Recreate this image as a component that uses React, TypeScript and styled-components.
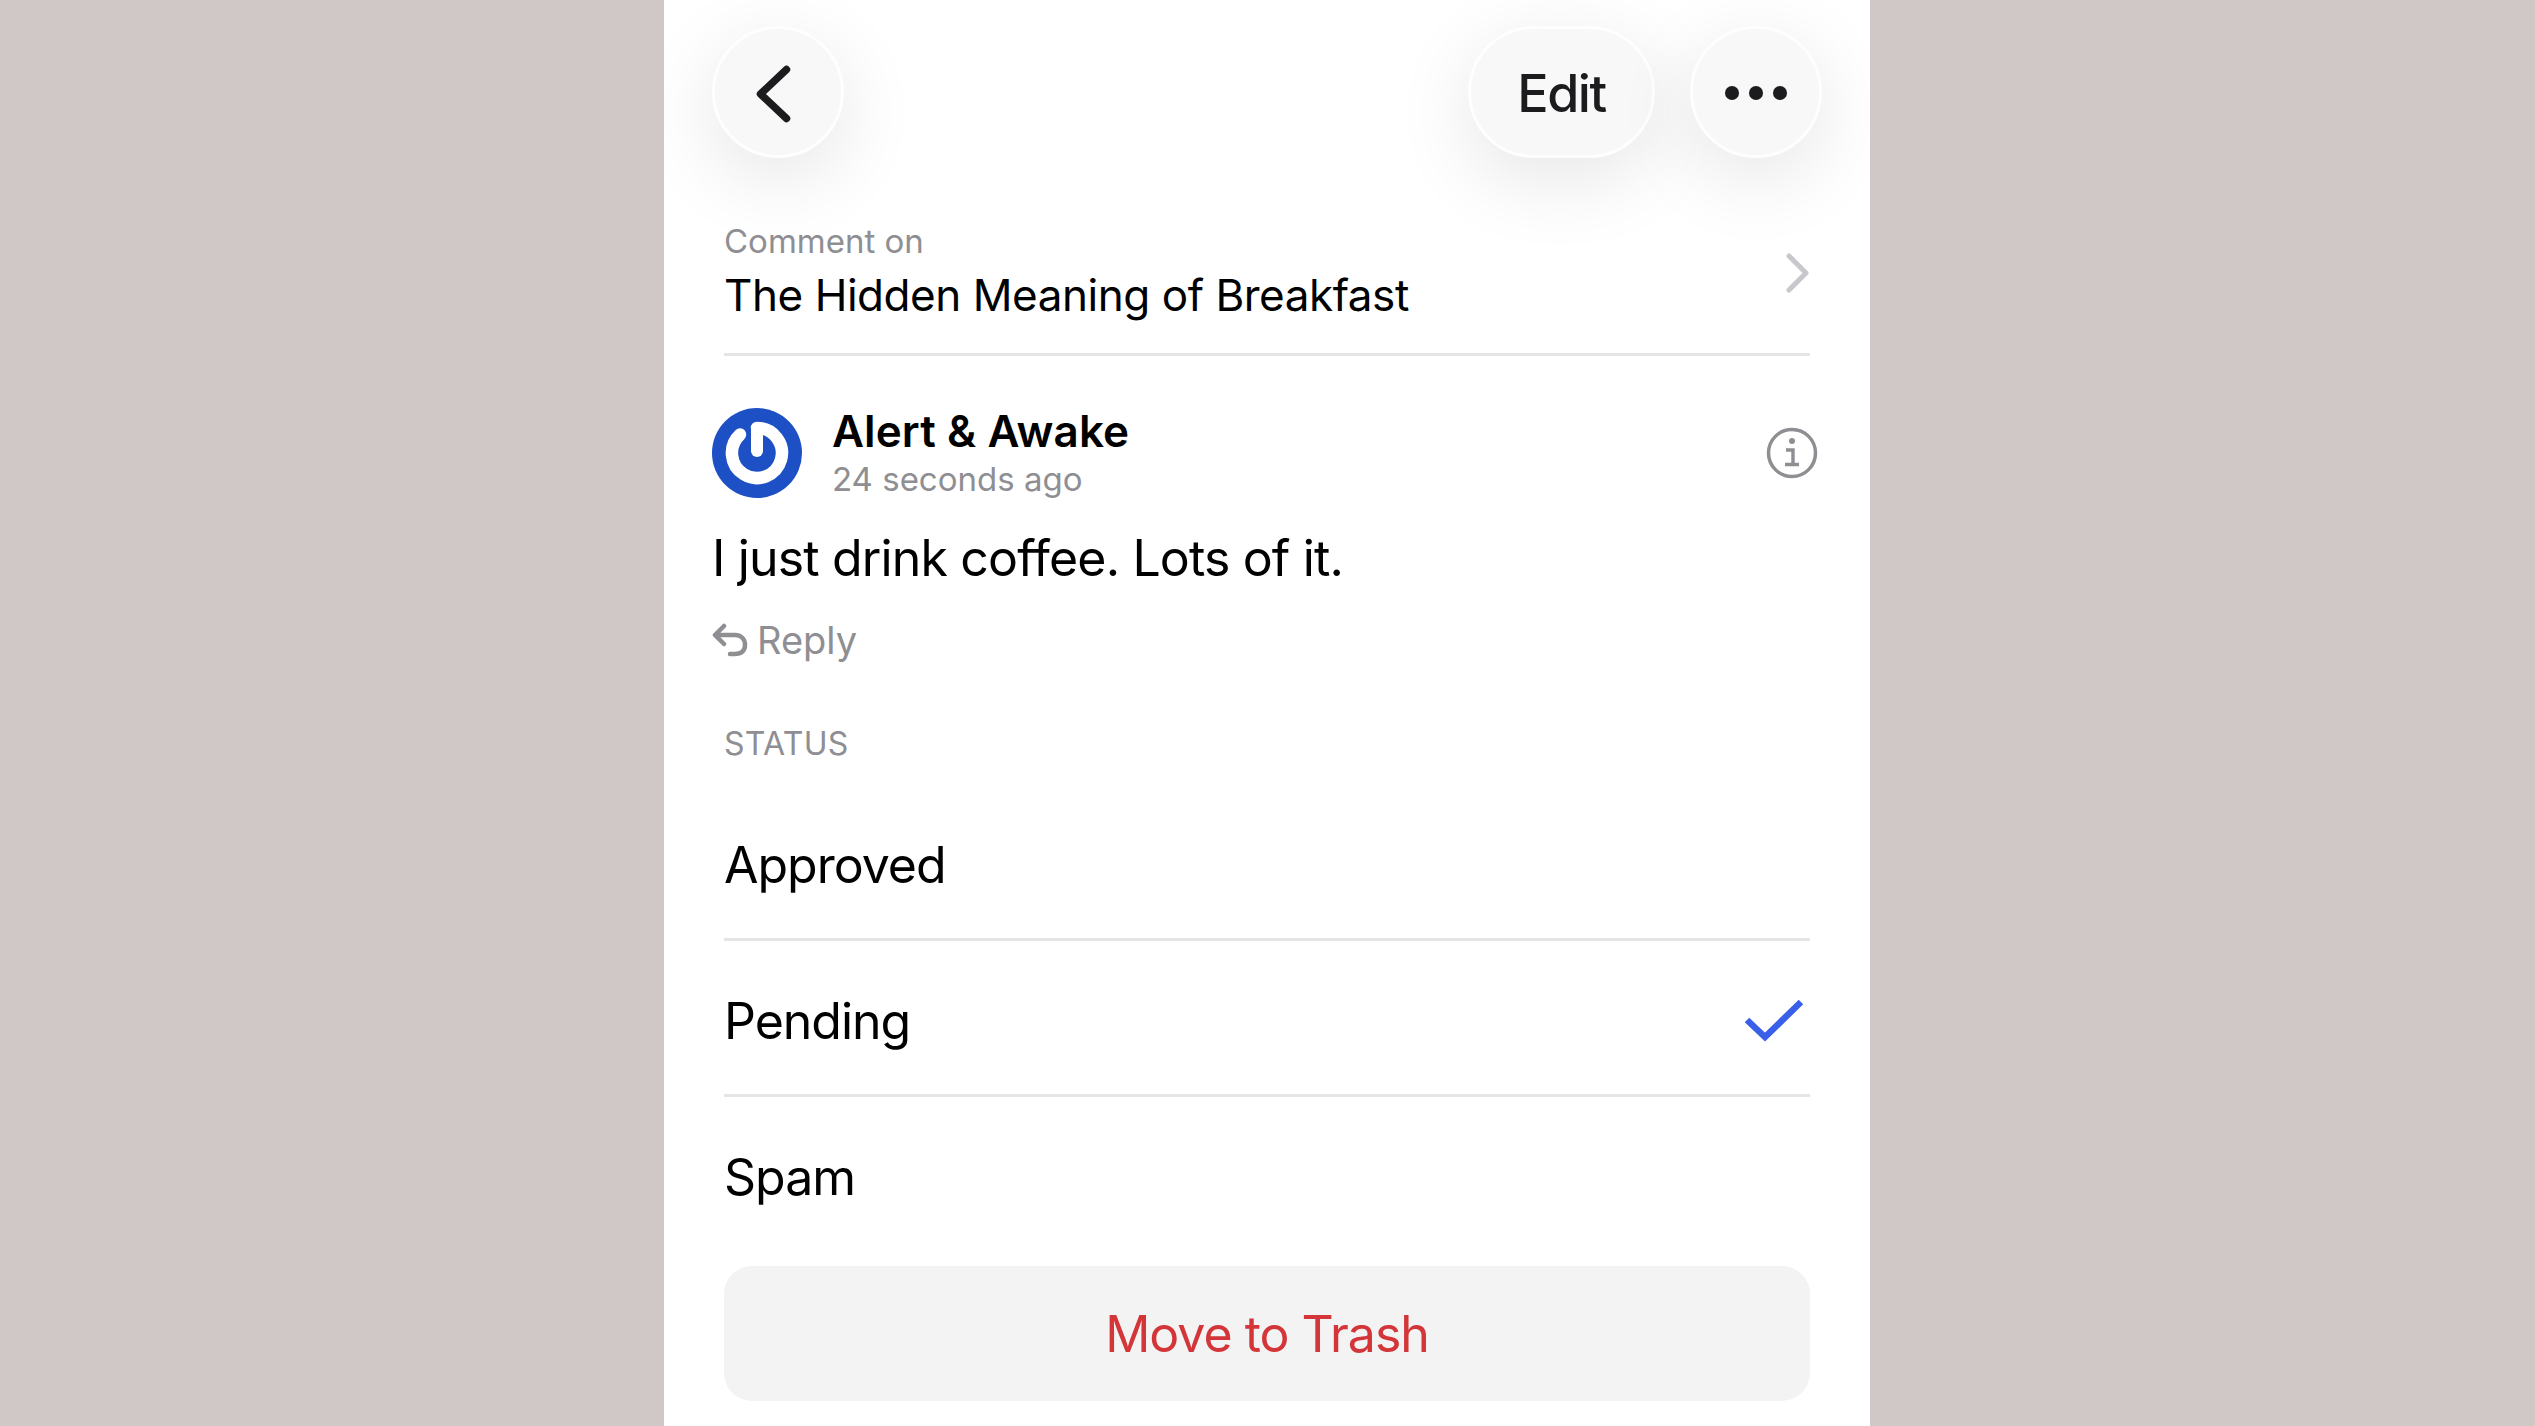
import { createGlobalStyle, styled } from "styled-components";

const GlobalStyle = createGlobalStyle`
  html, body {
    margin: 0;
    padding: 0;
    background: #d0c8c7;
  }

  body {
    font-family: Inter, "Noto Sans", sans-serif;
  }
`;

const Page = styled.div`
  width: 100%;
  height: 1426px;
  box-sizing: border-box;
  padding-right: 1px;
  display: flex;
  justify-content: center;
  overflow: hidden;
  background: #d0c8c7;
`;

const Phone = styled.div`
  width: 1206px;
  height: 1426px;
  background: #fff;
  display: flex;
  flex-direction: column;
  overflow: hidden;
`;

const TopBar = styled.div`
  display: flex;
  align-items: center;
  gap: 35px;
  padding: 26px 48px 0;
  height: 132px;
  flex-shrink: 0;
`;

const FloatButton = styled.div<{ $wide?: boolean }>`
  width: ${({ $wide }) => ($wide ? "187px" : "132px")};
  height: 132px;
  box-sizing: border-box;
  border: 3px solid #fefefe;
  border-radius: 66px;
  background: #f8f8f8;
  box-shadow: 0 20px 80px rgba(0, 0, 0, 0.1);
  display: flex;
  align-items: center;
  justify-content: center;
  color: #1c1c1e;
  font-size: 52px;
  font-weight: 500;
  letter-spacing: -1.5px;
  padding-top: 2px;
`;

const Spacer = styled.div`
  flex: 1;
`;

const Dots = styled.div`
  display: flex;
  gap: 10px;
`;

const Dot = styled.span`
  width: 14px;
  height: 14px;
  border-radius: 50%;
  background: #1c1c1e;
`;

const Article = styled.div`
  margin: 63px 60px 0;
  height: 135px;
  box-sizing: border-box;
  border-bottom: 3px solid #e5e5e5;
  display: flex;
  justify-content: space-between;
`;

const ArticleLabel = styled.div`
  color: #8e8e93;
  font-size: 33px;
  line-height: 40px;
`;

const ArticleTitle = styled.div`
  color: #000;
  font-size: 44px;
  letter-spacing: -0.45px;
  line-height: 54px;
  margin-top: 7px;
`;

const ChevronWrap = styled.div`
  padding-top: 32px;
`;

const Comment = styled.div`
  padding: 52px 48px 0;
`;

const Author = styled.div`
  display: flex;
  align-items: center;
  height: 90px;
`;

const AuthorText = styled.div`
  margin-left: 30px;
  flex: 1;
`;

const AuthorName = styled.div`
  color: #000;
  font-size: 44px;
  font-weight: 600;
  letter-spacing: 0.1px;
  line-height: 52px;
`;

const AuthorTime = styled.div`
  color: #8e8e93;
  font-size: 33px;
  line-height: 44px;
`;

const InfoWrap = styled.div`
  display: flex;
  margin-right: 4px;
`;

const CommentBody = styled.div`
  color: #000;
  font-size: 50px;
  letter-spacing: -0.85px;
  line-height: 62px;
  margin-top: 29px;
`;

const ReplyRow = styled.div`
  display: flex;
  align-items: center;
  gap: 9px;
  margin-top: 28px;
  color: #8e8e93;
  font-size: 38px;
  line-height: 46px;
`;

const SectionLabel = styled.div`
  margin: 61px 60px 0;
  color: #8e8e93;
  font-size: 32px;
  letter-spacing: 0.3px;
  line-height: 40px;
`;

const StatusList = styled.div`
  margin: 21px 60px 0;
`;

const StatusRow = styled.div<{ $last?: boolean }>`
  height: 156px;
  box-sizing: border-box;
  padding-top: 6px;
  display: flex;
  align-items: center;
  justify-content: space-between;
  color: #000;
  font-size: 50px;
  letter-spacing: -1px;
  border-bottom: 3px solid ${({ $last }) => ($last ? "transparent" : "#e5e5e5")};
`;

const CheckWrap = styled.div`
  display: flex;
  margin-right: 6px;
`;

const TrashButton = styled.div`
  margin: 13px 60px 0;
  height: 135px;
  flex-shrink: 0;
  border-radius: 28px;
  background: #f3f3f3;
  color: #d33538;
  font-size: 50px;
  letter-spacing: -1px;
  display: flex;
  align-items: center;
  justify-content: center;
`;

const Check = () => (
  <svg width="60" height="44" viewBox="0 0 60 44" fill="none">
    <path d="M3 21 L21 38 L57 3" stroke="#3a5fe8" strokeWidth="6.5" />
  </svg>
);

const BackIcon = () => (
  <svg width="48" height="62" viewBox="-4 0 48 62" fill="none">
    <path d="M28.5 7.5 L2.5 32 L28.5 56.5" stroke="#1c1c1e" strokeWidth="7.5" strokeLinecap="round" strokeLinejoin="round" />
  </svg>
);

const ChevronRight = () => (
  <svg width="24" height="40" viewBox="0 0 24 40" fill="none">
    <path d="M3 3 L20 20 L3 37" stroke="#c7c7cc" strokeWidth="5" strokeLinecap="round" strokeLinejoin="round" />
  </svg>
);

const Logo = () => (
  <svg width="90" height="90" viewBox="0 0 90 90" fill="none">
    <circle cx="45" cy="45" r="45" fill="#1c50c4" />
    <path d="M45 20 A25 25 0 1 1 28 26.6" stroke="#fff" strokeWidth="12.5" strokeLinecap="round" />
    <path d="M45 20 V43" stroke="#fff" strokeWidth="12" strokeLinecap="round" />
  </svg>
);

const InfoIcon = () => (
  <svg width="52" height="52" viewBox="0 0 52 52" fill="none">
    <circle cx="26" cy="26" r="23.5" stroke="#8e8e93" strokeWidth="3.5" />
    <circle cx="26" cy="14" r="3" fill="#8e8e93" />
    <path d="M20 23 H27 V37 M19 37.5 H33" stroke="#8e8e93" strokeWidth="3.4" />
  </svg>
);

const ReplyIcon = () => (
  <svg width="36" height="34" viewBox="0 0 36 34" fill="none">
    <path
      d="M12 3 L3 12 L12 21 M3 12 H23 C29 12 33 16 33 22 C33 28 29 31 23 31 H18"
      stroke="#8e8e93"
      strokeWidth="4.5"
      strokeLinejoin="round"
      strokeLinecap="round"
    />
  </svg>
);

export default function App() {
  return (
    <Page>
      <GlobalStyle />
      <Phone>
        <TopBar>
          <FloatButton><BackIcon /></FloatButton>
          <Spacer />
          <FloatButton $wide>Edit</FloatButton>
          <FloatButton>
            <Dots><Dot /><Dot /><Dot /></Dots>
          </FloatButton>
        </TopBar>
        <Article>
          <div>
            <ArticleLabel>Comment on</ArticleLabel>
            <ArticleTitle>The Hidden Meaning of Breakfast</ArticleTitle>
          </div>
          <ChevronWrap><ChevronRight /></ChevronWrap>
        </Article>
        <Comment>
          <Author>
            <Logo />
            <AuthorText>
              <AuthorName>Alert &amp; Awake</AuthorName>
              <AuthorTime>24 seconds ago</AuthorTime>
            </AuthorText>
            <InfoWrap><InfoIcon /></InfoWrap>
          </Author>
          <CommentBody>I just drink coffee. Lots of it.</CommentBody>
          <ReplyRow><ReplyIcon />Reply</ReplyRow>
        </Comment>
        <SectionLabel>STATUS</SectionLabel>
        <StatusList>
          <StatusRow>Approved</StatusRow>
          <StatusRow>Pending<CheckWrap><Check /></CheckWrap></StatusRow>
          <StatusRow $last>Spam</StatusRow>
        </StatusList>
        <TrashButton>Move to Trash</TrashButton>
      </Phone>
    </Page>
  );
}
